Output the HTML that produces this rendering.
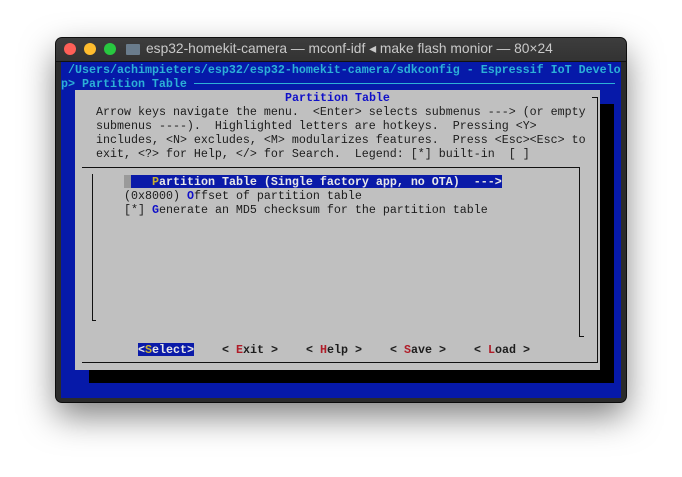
<!DOCTYPE html>
<html><head><meta charset="utf-8"><style>
body{margin:0;width:682px;height:477px;background:#fff;position:relative;overflow:hidden;font-family:"Liberation Mono",monospace}
.win{position:absolute;left:56px;top:38px;width:570px;height:364px;border-radius:6px;background:#2b2b2b;box-shadow:0 14px 34px rgba(0,0,0,.5),0 0 0 1px #111;overflow:hidden}
.tb{position:absolute;left:0;top:0;width:570px;height:23px;background:linear-gradient(#3d3d3d,#333);border-bottom:1px solid #111}
.dot{position:absolute;top:5px;width:12px;height:12px;border-radius:50%}
.title{position:absolute;left:90px;top:3px;font:13.8px "Liberation Sans",sans-serif;color:#c9c9c9;white-space:nowrap}
.term{position:absolute;left:61px;top:62px;width:560px;height:336px;background:#0619a9}
.t{position:absolute;white-space:pre;font-size:11.67px;line-height:14px;height:14px;color:#1c1c1c;margin-top:1px}
.c{color:#2cb0d6;font-weight:bold}
.b{color:#1010c8}
.r{color:#b01c28}
.y{color:#c8b030}
.l{position:absolute;background:#111}
</style></head><body>
<div class="win">
<div class="tb">
<div class="dot" style="left:8px;background:#fe5f57"></div>
<div class="dot" style="left:28px;background:#febc2e"></div>
<div class="dot" style="left:48px;background:#28c840"></div>
<div style="position:absolute;left:70px;top:6px;width:14px;height:11px;background:#6a7c8c;border-radius:1px"></div>
<div class="title">esp32-homekit-camera — mconf-idf ◂ make flash monior — 80×24</div>
</div>
</div>
<div class="term"></div>
<div style="position:absolute;left:89px;top:104px;width:525px;height:279px;background:#000"></div>
<div style="position:absolute;left:75px;top:90px;width:525px;height:280px;background:#c0c0c0"></div>
<div class="t c" style="left:68px;top:62px">/Users/achimpieters/esp32/esp32-homekit-camera/sdkconfig - Espressif IoT Develo</div>
<div class="t c" style="left:61px;top:76px">p> Partition Table</div>
<div style="position:absolute;left:194px;top:83px;width:421px;height:1px;background:#2cb0d6"></div>
<div class="l" style="left:597px;top:97px;width:1px;height:266px"></div>
<div class="l" style="left:592px;top:97px;width:6px;height:1px"></div>
<div class="l" style="left:82px;top:362px;width:516px;height:1px"></div>
<div class="l" style="left:82px;top:167px;width:497px;height:1px"></div>
<div class="l" style="left:92px;top:174px;width:1px;height:147px"></div>
<div class="l" style="left:92px;top:320px;width:4px;height:1px"></div>
<div class="l" style="left:579px;top:167px;width:1px;height:170px"></div>
<div class="l" style="left:579px;top:336px;width:5px;height:1px"></div>
<div class="t b" style="left:285px;top:90px;font-weight:bold">Partition Table</div>
<div class="t" style="left:96px;top:104px">Arrow keys navigate the menu.  &lt;Enter&gt; selects submenus ---&gt; (or empty</div>
<div class="t" style="left:96px;top:118px">submenus ----).  Highlighted letters are hotkeys.  Pressing &lt;Y&gt;</div>
<div class="t" style="left:96px;top:132px">includes, &lt;N&gt; excludes, &lt;M&gt; modularizes features.  Press &lt;Esc&gt;&lt;Esc&gt; to</div>
<div class="t" style="left:96px;top:146px">exit, &lt;?&gt; for Help, &lt;/&gt; for Search.  Legend: [*] built-in  [ ]</div>
<div style="position:absolute;left:124px;top:175px;width:7px;height:13px;background:#9a9a9a"></div>
<div style="position:absolute;left:131px;top:175px;width:371px;height:13px;background:#0a1aa8"></div>
<div class="t" style="left:152px;top:174px;color:#e8e8e8;font-weight:bold"><span class="y">P</span>artition Table (Single factory app, no OTA)  ---&gt;</div>
<div class="t" style="left:124px;top:188px">(0x8000) <span class="b" style="font-weight:bold">O</span>ffset of partition table</div>
<div class="t" style="left:124px;top:202px">[*] <span class="b" style="font-weight:bold">G</span>enerate an MD5 checksum for the partition table</div>
<div style="position:absolute;left:138px;top:343px;width:56px;height:13px;background:#0a1aa8"></div>
<div class="t" style="left:138px;top:342px;color:#e8e8e8;font-weight:bold">&lt;<span class="y">S</span>elect&gt;</div>
<div class="t" style="left:222px;top:342px;font-weight:bold">&lt; <span class="r">E</span>xit &gt;</div>
<div class="t" style="left:306px;top:342px;font-weight:bold">&lt; <span class="r">H</span>elp &gt;</div>
<div class="t" style="left:390px;top:342px;font-weight:bold">&lt; <span class="r">S</span>ave &gt;</div>
<div class="t" style="left:474px;top:342px;font-weight:bold">&lt; <span class="r">L</span>oad &gt;</div>
</body></html>
